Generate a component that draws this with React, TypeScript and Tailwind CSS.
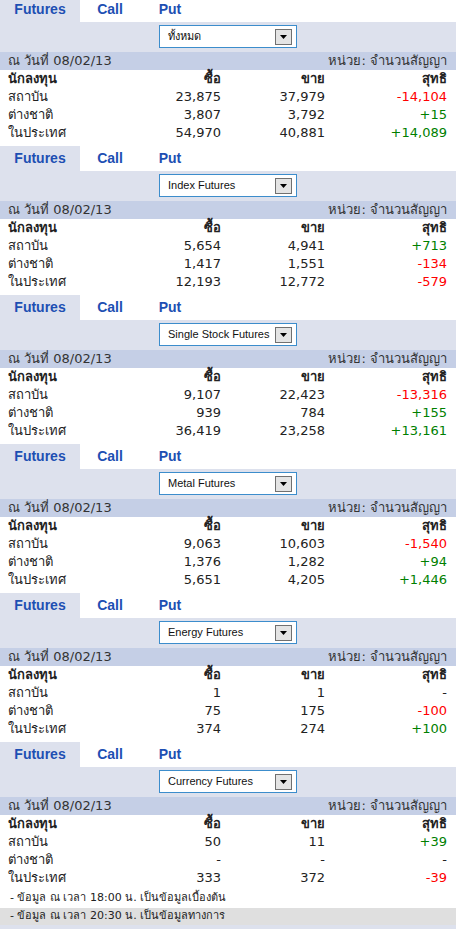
import React from "react";

type Row = { name: string; buy: string; sell: string; net: string };
type Section = { product: string; rows: Row[] };

const sections: Section[] = [
  {
    product: "ทั้งหมด",
    rows: [
      { name: "สถาบัน", buy: "23,875", sell: "37,979", net: "-14,104" },
      { name: "ต่างชาติ", buy: "3,807", sell: "3,792", net: "+15" },
      { name: "ในประเทศ", buy: "54,970", sell: "40,881", net: "+14,089" },
    ],
  },
  {
    product: "Index Futures",
    rows: [
      { name: "สถาบัน", buy: "5,654", sell: "4,941", net: "+713" },
      { name: "ต่างชาติ", buy: "1,417", sell: "1,551", net: "-134" },
      { name: "ในประเทศ", buy: "12,193", sell: "12,772", net: "-579" },
    ],
  },
  {
    product: "Single Stock Futures",
    rows: [
      { name: "สถาบัน", buy: "9,107", sell: "22,423", net: "-13,316" },
      { name: "ต่างชาติ", buy: "939", sell: "784", net: "+155" },
      { name: "ในประเทศ", buy: "36,419", sell: "23,258", net: "+13,161" },
    ],
  },
  {
    product: "Metal Futures",
    rows: [
      { name: "สถาบัน", buy: "9,063", sell: "10,603", net: "-1,540" },
      { name: "ต่างชาติ", buy: "1,376", sell: "1,282", net: "+94" },
      { name: "ในประเทศ", buy: "5,651", sell: "4,205", net: "+1,446" },
    ],
  },
  {
    product: "Energy Futures",
    rows: [
      { name: "สถาบัน", buy: "1", sell: "1", net: "-" },
      { name: "ต่างชาติ", buy: "75", sell: "175", net: "-100" },
      { name: "ในประเทศ", buy: "374", sell: "274", net: "+100" },
    ],
  },
  {
    product: "Currency Futures",
    rows: [
      { name: "สถาบัน", buy: "50", sell: "11", net: "+39" },
      { name: "ต่างชาติ", buy: "-", sell: "-", net: "-" },
      { name: "ในประเทศ", buy: "333", sell: "372", net: "-39" },
    ],
  },
];

const netColor = (v: string) => {
  if (v.startsWith("+")) return "text-[#008000]";
  if (v.length > 1 && v.startsWith("-")) return "text-[#ff0000]";
  return "text-[#222]";
};

// tabs + dropdown use an Arial-width face, the table keeps the wider one
const narrow = "font-['Liberation_Sans',Arial,sans-serif]";

const Tabs = () => (
  <div className={`flex h-[25px] bg-white text-[14px] font-bold text-[#1d4fb3] ${narrow}`}>
    <div className="flex w-[80px] items-center justify-center bg-[#dde1ed]">Futures</div>
    <div className="flex w-[60px] items-center justify-center">Call</div>
    <div className="flex w-[60px] items-center justify-center">Put</div>
  </div>
);

const Select = ({ label }: { label: string }) => (
  <div className="flex h-[30px] justify-center bg-[#dde1ed] pt-[3px]">
    <div
      className={`flex h-[23px] w-[138px] items-center justify-between border border-[#3c8dcc] bg-white pl-2 pr-[4px] text-[11px] text-[#111] ${narrow}`}
    >
      <span>{label}</span>
      <span className="flex h-[16px] w-[17px] items-center justify-center border border-[#707070] bg-[#e4e4e4]">
        <svg width="7" height="4" viewBox="0 0 7 4">
          <path d="M0 0h7L3.5 4z" fill="#000" />
        </svg>
      </span>
    </div>
  </div>
);

const Cells = ({ cells, bold, last }: { cells: [string, string, string, string]; bold?: boolean; last?: string }) => (
  <div className={`flex h-[18px] items-center pl-2 text-[13px] text-[#222] ${bold ? "font-bold" : ""}`}>
    <div className="w-[113px]">{cells[0]}</div>
    <div className="w-[100px] text-right">{cells[1]}</div>
    <div className="w-[104px] text-right">{cells[2]}</div>
    <div className={`w-[122px] text-right ${last ?? ""}`}>{cells[3]}</div>
  </div>
);

const Block = ({ s, tail }: { s: Section; tail?: boolean }) => (
  <div className={tail ? "" : "pb-[4px]"}>
    <Tabs />
    <Select label={s.product} />
    <div className="flex h-[18px] items-center justify-between bg-[#c5cfe6] pl-2 pr-[9px] text-[13px] text-[#333]">
      <span>ณ วันที่ 08/02/13</span>
      <span>หน่วย: จำนวนสัญญา</span>
    </div>
    <Cells cells={["นักลงทุน", "ซื้อ", "ขาย", "สุทธิ"]} bold />
    {s.rows.map((r) => (
      <Cells key={r.name} cells={[r.name, r.buy, r.sell, r.net]} last={netColor(r.net)} />
    ))}
  </div>
);

export default function App() {
  return (
    <div className="-mt-[3px] w-[456px] bg-white font-['DejaVu_Sans','Noto_Sans',sans-serif]">
      {sections.map((s, i) => (
        <Block key={s.product} s={s} tail={i === sections.length - 1} />
      ))}
      <div className="flex h-[21px] items-center pl-[10px] pt-[2px] text-[11px] text-[#222]">
        - ข้อมูล ณ เวลา 18:00 น. เป็นข้อมูลเบื้องต้น
      </div>
      <div className="flex h-[17px] items-center bg-[#dfdfdf] pl-[10px] text-[11px] text-[#222]">
        - ข้อมูล ณ เวลา 20:30 น. เป็นข้อมูลทางการ
      </div>
      <div className="h-[20px] bg-[#dde1ed]" />
    </div>
  );
}
